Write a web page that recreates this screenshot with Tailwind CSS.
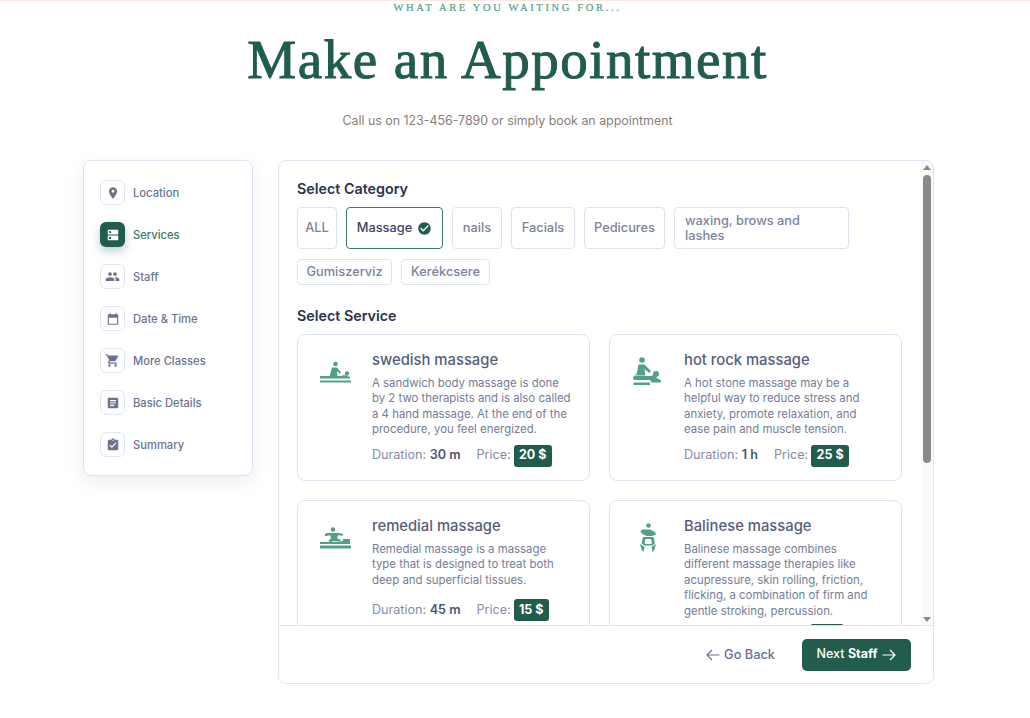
<!DOCTYPE html>
<html lang="en">
<head>
<meta charset="utf-8">
<title>Make an Appointment</title>
<script src="https://cdn.jsdelivr.net/npm/@tailwindcss/browser@4"></script>
</head>
<body class="bg-white font-['Inter','Noto_Sans',sans-serif] overflow-hidden">
<div class="h-[718px] w-[1030px] flex flex-col">
  <div class="h-px bg-[#fbe6e0]"></div>
  <header class="w-[1015px] text-center">
    <p class="h-[13px] mt-px font-['Liberation_Serif',serif] text-[10.5px] leading-[12px] tracking-[2.65px] text-[#4f9f88] [-webkit-text-stroke:0.2px_#4f9f88]">WHAT ARE YOU WAITING FOR...</p>
    <h1 class="mt-[15px] h-[60px] font-['Liberation_Serif',serif] text-[55px] leading-[60px] font-normal tracking-[1.5px] text-[#215c4e] [-webkit-text-stroke:1px_#215c4e]">Make an Appointment</h1>
    <p class="mt-[21px] h-[20px] text-[12.4px] leading-[20px] text-[#87807a]">Call us on 123-456-7890 or simply book an appointment</p>
  </header>
  <div class="mt-[29px] pl-[83px] flex items-start gap-[25px]">
    <aside class="w-[170px] h-[316px] rounded-lg border border-[#dfe3f1] bg-white shadow-[0_6px_18px_rgba(90,105,150,0.12)] pt-[19px] pl-[16px] flex flex-col gap-[17px]">
      <div class="flex items-center gap-2 h-[25px]">
        <div class="w-[25px] h-[25px] rounded-md border border-[#e3e6f2] flex items-center justify-center"><svg class="w-[14px] h-[14px] fill-[#6c7390]" viewBox="0 0 24 24"><path d="M12 2C8.13 2 5 5.13 5 9c0 5.25 7 13 7 13s7-7.75 7-13c0-3.87-3.13-7-7-7zm0 9.5a2.5 2.5 0 010-5 2.5 2.5 0 010 5z"/></svg></div>
        <span class="mt-px text-[11.2px] font-medium text-[#6c7390]">Location</span>
      </div>
      <div class="flex items-center gap-2 h-[25px]">
        <div class="w-[25px] h-[25px] rounded-md bg-[#215c4e] shadow-[0_4px_10px_rgba(33,92,78,0.3)] flex items-center justify-center"><svg class="w-[14px] h-[14px] fill-white" viewBox="0 0 24 24"><path d="M20 13H4c-.55 0-1 .45-1 1v6c0 .55.45 1 1 1h16c.55 0 1-.45 1-1v-6c0-.55-.45-1-1-1zM7 19c-1.1 0-2-.9-2-2s.9-2 2-2 2 .9 2 2-.9 2-2 2zM20 3H4c-.55 0-1 .45-1 1v6c0 .55.45 1 1 1h16c.55 0 1-.45 1-1V4c0-.55-.45-1-1-1zM7 9c-1.1 0-2-.9-2-2s.9-2 2-2 2 .9 2 2-.9 2-2 2z"/></svg></div>
        <span class="mt-px text-[11.2px] font-medium text-[#3b7a68]">Services</span>
      </div>
      <div class="flex items-center gap-2 h-[25px]">
        <div class="w-[25px] h-[25px] rounded-md border border-[#e3e6f2] flex items-center justify-center"><svg class="w-[15px] h-[15px] fill-[#6c7390]" viewBox="0 0 24 24"><path d="M16 11c1.66 0 2.99-1.34 2.99-3S17.66 5 16 5c-1.66 0-3 1.34-3 3s1.34 3 3 3zm-8 0c1.66 0 2.99-1.34 2.99-3S9.66 5 8 5C6.34 5 5 6.34 5 8s1.34 3 3 3zm0 2c-2.33 0-7 1.17-7 3.5V19h14v-2.5c0-2.33-4.67-3.5-7-3.5zm8 0c-.29 0-.62.02-.97.05 1.16.84 1.97 1.97 1.97 3.45V19h6v-2.5c0-2.33-4.67-3.5-7-3.5z"/></svg></div>
        <span class="mt-px text-[11.2px] font-medium text-[#6c7390]">Staff</span>
      </div>
      <div class="flex items-center gap-2 h-[25px]">
        <div class="w-[25px] h-[25px] rounded-md border border-[#e3e6f2] flex items-center justify-center"><svg class="w-[14px] h-[14px] fill-[#6c7390]" viewBox="0 0 24 24"><path d="M19 4h-1V2h-2v2H8V2H6v2H5c-1.1 0-2 .9-2 2v14c0 1.1.9 2 2 2h14c1.1 0 2-.9 2-2V6c0-1.1-.9-2-2-2zm0 16H5V10h14v10z"/></svg></div>
        <span class="mt-px text-[11.2px] font-medium text-[#6c7390]">Date &amp; Time</span>
      </div>
      <div class="flex items-center gap-2 h-[25px]">
        <div class="w-[25px] h-[25px] rounded-md border border-[#e3e6f2] flex items-center justify-center"><svg class="w-[15px] h-[15px] fill-[#6c7390]" viewBox="0 0 24 24"><path d="M7 18c-1.1 0-1.99.9-1.99 2S5.9 22 7 22s2-.9 2-2-.9-2-2-2zM1 2v2h2l3.6 7.59-1.35 2.45c-.16.28-.25.61-.25.96 0 1.1.9 2 2 2h12v-2H7.42c-.14 0-.25-.11-.25-.25l.03-.12.9-1.63h7.45c.75 0 1.41-.41 1.75-1.03l3.58-6.49A1 1 0 0020 4H5.21l-.94-2H1zm16 16c-1.1 0-1.99.9-1.99 2s.89 2 1.99 2 2-.9 2-2-.9-2-2-2z"/></svg></div>
        <span class="mt-px text-[11.2px] font-medium text-[#6c7390]">More Classes</span>
      </div>
      <div class="flex items-center gap-2 h-[25px]">
        <div class="w-[25px] h-[25px] rounded-md border border-[#e3e6f2] flex items-center justify-center"><svg class="w-[14px] h-[14px] fill-[#6c7390]" viewBox="0 0 24 24"><path d="M19 3H5c-1.1 0-2 .9-2 2v14c0 1.1.9 2 2 2h14c1.1 0 2-.9 2-2V5c0-1.1-.9-2-2-2zm-5 14H7v-2h7v2zm3-4H7v-2h10v2zm0-4H7V7h10v2z"/></svg></div>
        <span class="mt-px text-[11.2px] font-medium text-[#6c7390]">Basic Details</span>
      </div>
      <div class="flex items-center gap-2 h-[25px]">
        <div class="w-[25px] h-[25px] rounded-md border border-[#e3e6f2] flex items-center justify-center"><svg class="w-[14px] h-[14px] fill-[#6c7390]" viewBox="0 0 24 24"><path d="M19 3h-4.18C14.4 1.84 13.3 1 12 1c-1.3 0-2.4.84-2.82 2H5c-1.1 0-2 .9-2 2v14c0 1.1.9 2 2 2h14c1.1 0 2-.9 2-2V5c0-1.1-.9-2-2-2zm-7 0c.55 0 1 .45 1 1s-.45 1-1 1-1-.45-1-1 .45-1 1-1zm-2 14l-4-4 1.41-1.41L10 14.17l6.59-6.59L18 9l-8 8z"/></svg></div>
        <span class="mt-px text-[11.2px] font-medium text-[#6c7390]">Summary</span>
      </div>
    </aside>
    <main class="w-[656px] h-[524px] rounded-lg border border-[#dfe3f1] bg-white flex flex-col overflow-hidden">
      <div class="relative h-[464px] shrink-0 overflow-hidden pl-[18px] pt-[19px]">
        <h2 class="h-[17px] text-[14.3px] leading-[17px] font-semibold text-[#2a3350]">Select Category</h2>
        <div class="mt-[10px] flex flex-wrap gap-y-[10px] gap-x-[9px] w-[570px] text-[12.8px] font-medium text-[#7c84a0]">
          <div class="w-[40px] h-[42px] rounded border border-[#dfe3f1] flex items-center justify-center">ALL</div>
          <div class="w-[97px] h-[42px] rounded border border-[#3f7c6b] flex items-center justify-center gap-[5px] text-[#3c4563]">Massage<svg class="w-[15px] h-[15px] fill-[#215c4e]" viewBox="0 0 24 24"><path d="M12 2C6.48 2 2 6.48 2 12s4.48 10 10 10 10-4.48 10-10S17.52 2 12 2zm-2 15l-5-5 1.41-1.41L10 14.17l7.59-7.59L19 8l-9 9z"/></svg></div>
          <div class="w-[50px] h-[42px] rounded border border-[#dfe3f1] flex items-center justify-center">nails</div>
          <div class="w-[64px] h-[42px] rounded border border-[#dfe3f1] flex items-center justify-center">Facials</div>
          <div class="w-[81px] h-[42px] rounded border border-[#dfe3f1] flex items-center justify-center">Pedicures</div>
          <div class="w-[175px] h-[42px] rounded border border-[#dfe3f1] flex items-center px-[10px] leading-[15.5px]">waxing, brows and<br>lashes</div>
          <div class="w-[95px] h-[26px] rounded border border-[#dfe3f1] flex items-center justify-center">Gumiszerviz</div>
          <div class="w-[89px] h-[26px] rounded border border-[#dfe3f1] flex items-center justify-center">Kerékcsere</div>
        </div>
        <h2 class="mt-[22px] h-[17px] text-[14.3px] leading-[17px] font-semibold text-[#2a3350]">Select Service</h2>
        <div class="mt-[10px] grid grid-cols-[293px_293px] gap-x-[19px] gap-y-[19px]">
          <article class="h-[147px] rounded-lg border border-[#dfe3f1] flex">
            <div class="w-[74px] shrink-0 pt-[26px] pl-[22px]">
              <svg class="w-[31px] h-[22px] fill-[#52a08a]" viewBox="0 0 31 22"><circle cx="15.5" cy="3" r="2.3"/><path d="M12 6.500h5l4 5-1.600 1.200-2.400-2.600.5 5.400H9.500l2.500-9z"/><circle cx="27" cy="12.500" r="2.200"/><path d="M0 15h21l3-1 6 2v1.600H0V15zM0 19.500h31V21.500H0z"/></svg>
            </div>
            <div class="pt-[15px]">
              <h3 class="h-[20px] text-[14.8px] leading-[20px] font-medium text-[#565e7a]">swedish massage</h3>
              <p class="mt-[6px] text-[11.4px] leading-[15.4px] text-[#757c98] whitespace-nowrap">A sandwich body massage is done<br>by 2 two therapists and is also called<br>a 4 hand massage. At the end of the<br>procedure, you feel energized.</p>
              <div class="mt-[7px] flex items-center h-[22px] text-[12.6px] text-[#858ca6]">Duration:&nbsp;<b class="font-semibold text-[#4d5570]">30 m</b><span class="ml-4">Price:</span><span class="ml-[3px] w-[38px] h-[22px] rounded-[3px] bg-[#215c4e] text-white font-bold text-[12.5px] flex items-center justify-center">20 $</span></div>
            </div>
          </article>
          <article class="h-[147px] rounded-lg border border-[#dfe3f1] flex">
            <div class="w-[74px] shrink-0 pt-[22px] pl-[22px]">
              <svg class="w-[30px] h-[29px] fill-[#52a08a]" viewBox="0 0 30 29"><circle cx="10" cy="3" r="2.800"/><path d="M6.500 7.500h6l6.500 6.500-1.800 2-4.700-4 .8 6.500H1.500l3-1 2-10z"/><circle cx="24" cy="17" r="3"/><path d="M3 19h15.500l3-1 3.500 3 4 2.500v2H19.500l-1.500-2.500H3a1.700 1.700 0 0 1 0-4zM1.500 25.500H18V28H1.500z"/></svg>
            </div>
            <div class="pt-[15px]">
              <h3 class="h-[20px] text-[14.8px] leading-[20px] font-medium text-[#565e7a]">hot rock massage</h3>
              <p class="mt-[6px] text-[11.4px] leading-[15.4px] text-[#757c98] whitespace-nowrap">A hot stone massage may be a<br>helpful way to reduce stress and<br>anxiety, promote relaxation, and<br>ease pain and muscle tension.</p>
              <div class="mt-[7px] flex items-center h-[22px] text-[12.6px] text-[#858ca6]">Duration:&nbsp;<b class="font-semibold text-[#4d5570]">1 h</b><span class="ml-4">Price:</span><span class="ml-[3px] w-[38px] h-[22px] rounded-[3px] bg-[#215c4e] text-white font-bold text-[12.5px] flex items-center justify-center">25 $</span></div>
            </div>
          </article>
          <article class="h-[147px] rounded-lg border border-[#dfe3f1] flex">
            <div class="w-[74px] shrink-0 pt-[26px] pl-[22px]">
              <svg class="w-[31px] h-[22px] fill-[#52a08a]" viewBox="0 0 31 22"><circle cx="13" cy="2.500" r="2.300"/><path d="M7 6h12l4 1v1.800l-5-.6-1 3 3.500 1.500v1.500h-8l-1.500 1.500-2-1.500H8l3-3-1-3-5 1V7l2-1z"/><path d="M23 12h7v5H0v-2h15l8-1zM0 18.500h31V21.500H0z"/></svg>
            </div>
            <div class="pt-[15px]">
              <h3 class="h-[20px] text-[14.8px] leading-[20px] font-medium text-[#565e7a]">remedial massage</h3>
              <p class="mt-[6px] text-[11.4px] leading-[15.4px] text-[#757c98] whitespace-nowrap">Remedial massage is a massage<br>type that is designed to treat both<br>deep and superficial tissues.</p>
              <div class="mt-[11px] flex items-center h-[22px] text-[12.6px] text-[#858ca6]">Duration:&nbsp;<b class="font-semibold text-[#4d5570]">45 m</b><span class="ml-4">Price:</span><span class="ml-[3px] w-[35px] h-[22px] rounded-[3px] bg-[#215c4e] text-white font-bold text-[12.5px] flex items-center justify-center">15 $</span></div>
            </div>
          </article>
          <article class="h-[147px] rounded-lg border border-[#dfe3f1] flex">
            <div class="w-[74px] shrink-0 pt-[22px] pl-[30px]">
              <svg class="w-[16px] h-[29px] fill-[#52a08a]" viewBox="0 0 16 29"><circle cx="8.500" cy="2.500" r="2.300"/><path d="M2 6.500h8l5 2.500 1 2.500-4 1.500H6.500L2.500 11l-2-2.500z"/><path fill-rule="evenodd" d="M3 14h10.500l1.500 6-2.500 2.500H4L1.500 20zM5.500 16l-1 4 1.500 1h4.500l1.500-1-1-4z"/><path d="M0 21l3 1.800 1.500 2.200-1 .7L5 22.500 3.500 29 1.500 26.500zM16 21l-3 1.800-1.500 2.200 1 .7L11 22.500 12.500 29 14.500 26.500z"/></svg>
            </div>
            <div class="pt-[15px]">
              <h3 class="h-[20px] text-[14.8px] leading-[20px] font-medium text-[#565e7a]">Balinese massage</h3>
              <p class="mt-[6px] text-[11.4px] leading-[15.4px] text-[#757c98] whitespace-nowrap">Balinese massage combines<br>different massage therapies like<br>acupressure, skin rolling, friction,<br>flicking, a combination of firm and<br>gentle stroking, percussion.</p>
              <div class="mt-[5px] ml-[126px] w-[34px] h-[22px] rounded-[3px] bg-[#215c4e]"></div>
            </div>
          </article>
        </div>
        <div class="absolute top-0 right-0 w-[12px] h-full bg-[#fafafa]">
          <div class="absolute top-[4px] left-[2px] w-0 h-0 border-x-[4px] border-x-transparent border-b-[5px] border-b-[#8a8a8a]"></div>
          <div class="absolute top-[14px] left-[2px] w-[8px] h-[288px] rounded-full bg-[#8a8a8a]"></div>
          <div class="absolute bottom-[3px] left-[2px] w-0 h-0 border-x-[4px] border-x-transparent border-t-[5px] border-t-[#8a8a8a]"></div>
        </div>
      </div>
      <div class="h-[58px] border-t border-[#dfe3f1] flex items-center justify-end pr-[22px] bg-white">
        <div class="flex items-center gap-[4px] text-[12.8px] font-medium text-[#667091]"><svg class="w-[14px] h-[12px] stroke-[#667091] fill-none" viewBox="0 0 14 12" stroke-width="1.2"><path d="M13.500 6H1M6 1L1 6l5 5"/></svg>Go Back</div>
        <div class="ml-[27px] w-[109px] h-[32px] rounded-[5px] bg-[#215c4e] text-white text-[12.5px] font-medium flex items-center justify-center gap-[5px]"><span>Next <b class="font-bold">Staff</b></span><svg class="w-[14px] h-[12px] stroke-white fill-none" viewBox="0 0 14 12" stroke-width="1.2"><path d="M.5 6H13M8 1l5 5-5 5"/></svg></div>
      </div>
    </main>
  </div>
</div>
</body>
</html>
